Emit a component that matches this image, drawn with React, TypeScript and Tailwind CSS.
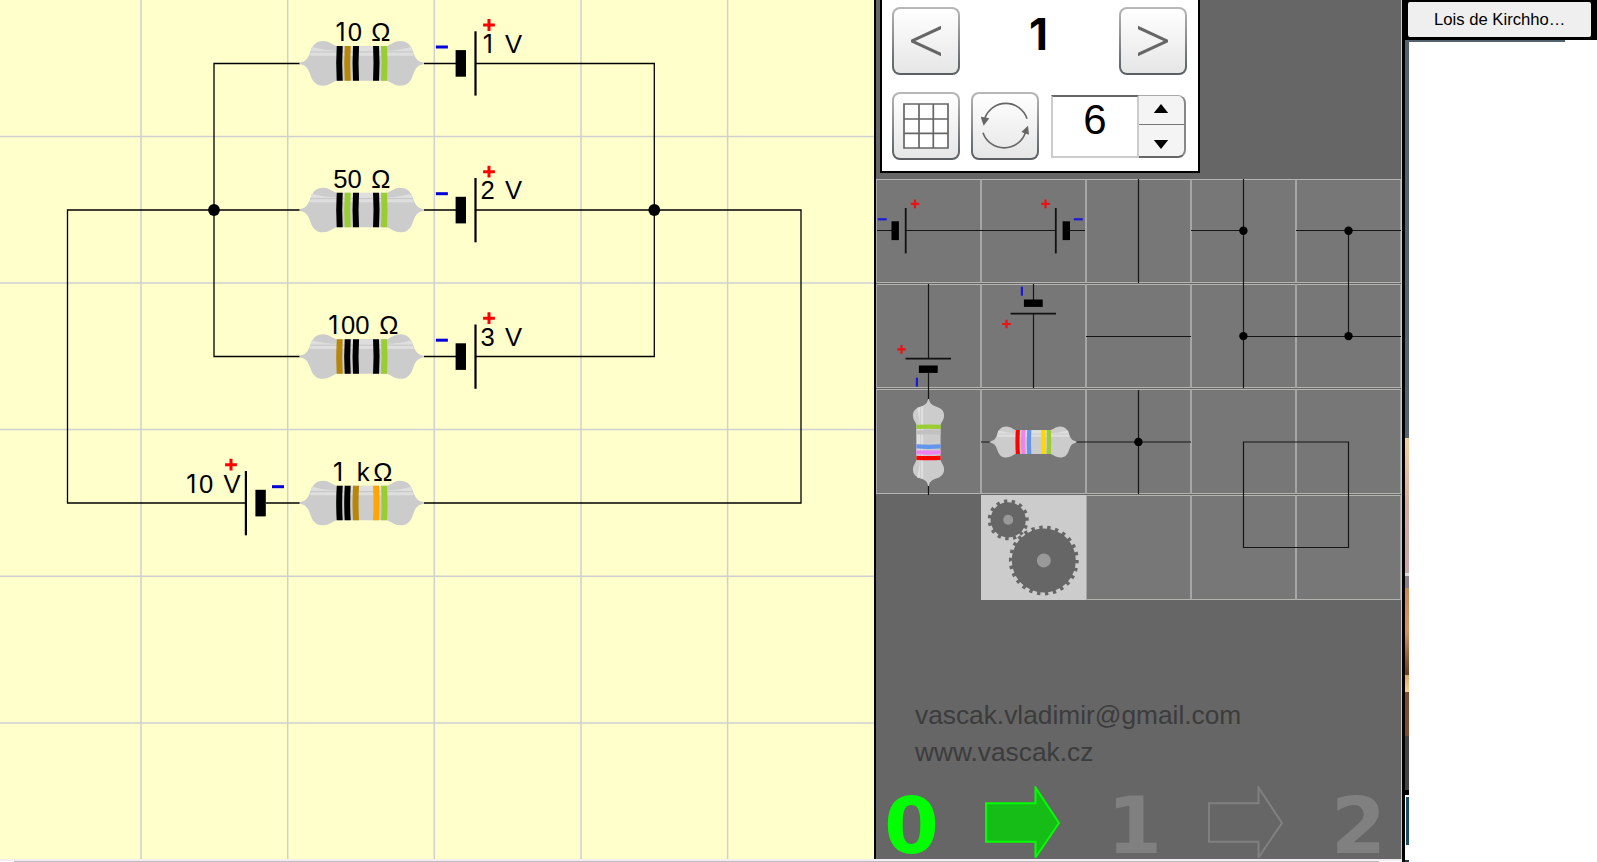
import type { ReactNode } from "react";

const LABEL_FONT = "fill-black font-['Liberation_Sans',Arial,sans-serif] text-[25.6px]";

const BLACK = "#000000";
const BROWN = "#b8860b";
const GREEN = "#9acd32";
const ORANGE = "#ffa500";

const BAND_X = [-66, -42, -17, 43, 67];

function Resistor({ x, y, bands, scale = 1 / 3, rotate = 0 }: { x: number; y: number; bands: string[]; scale?: number; rotate?: number }) {
  return (
    <g transform={`translate(${x} ${y}) rotate(${rotate}) scale(${scale})`}>
      <path
        fill="#cccccc"
        d="M-187 -2C-170 -5 -163 -10 -155 -32C-148 -54 -138 -67 -115 -67C-98 -67 -90 -57 -76 -52H76C90 -57 98 -67 115 -67C138 -67 148 -54 155 -32C163 -10 170 -5 187 -2V2C170 5 163 10 155 32C148 54 138 67 115 67C98 67 90 57 76 52H-76C-90 57 -98 67 -115 67C-138 67 -148 54 -155 32C-163 10 -170 5 -187 2Z"
      />
      <path fill="#dedede" d="M-150 -49C-120 -42 -98 -38 -76 -38V-51H76V-38C98 -38 120 -42 150 -49L156 -23H-156Z" />
      <path stroke="#c4c4c4" strokeWidth="3" d="M-154 -34H154" />
      {BAND_X.map((bx, i) => {
        const bend = i < 3 ? 1 : -1;
        return (
          <path
            key={bx}
            fill={bands[i]}
            d={`M${bx - 9} -52H${bx + 9}Q${bx + 9 - 3 * bend} 0 ${bx + 9} 52H${bx - 9}Q${bx - 9 - 3 * bend} 0 ${bx - 9} -52Z`}
          />
        );
      })}
    </g>
  );
}

function Battery({ x, y, flip = false }: { x: number; y: number; flip?: boolean }) {
  return (
    <g transform={`translate(${x} ${y}) scale(${flip ? -1 : 1} 1)`}>
      <rect x="-19.8" y="-13.2" width="10.4" height="26.6" />
      <rect x="-1" y="-32" width="2.2" height="64.3" />
      <path stroke="#ff0000" strokeWidth="3" d="M7.7 -38.3H19.5M13.6 -44.2V-32.4" transform={flip ? "translate(1.4 0)" : undefined} />
      <path stroke="#0000dd" strokeWidth="3" d="M-39.5 -16.3H-27.5" transform={flip ? "translate(1.5 0)" : undefined} />
    </g>
  );
}

function SmallBattery({ x, y, rotate = 0, flip = false }: { x: number; y: number; rotate?: number; flip?: boolean }) {
  return (
    <g transform={`translate(${x} ${y}) rotate(${rotate}) scale(${flip ? -1 : 1} 1)`}>
      <rect x="-14.2" y="-9.4" width="7.4" height="18.8" />
      <path stroke="#111111" strokeWidth="1.8" d="M0 -22.7V22.7" />
      <path stroke="#ee1111" strokeWidth="2.2" d={flip ? "M6 -26.8H14.6M10.3 -31.1V-22.5" : "M5 -26.8H13.6M9.3 -31.1V-22.5"} />
      <path stroke="#1a1ad6" strokeWidth="2.2" d={flip ? "M-27 -11.4H-18" : "M-28 -11.4H-19"} />
    </g>
  );
}

const ROWS = [
  { y: 63.3, bands: [BLACK, BROWN, BLACK, BLACK, GREEN] },
  { y: 210, bands: [BLACK, GREEN, BLACK, BLACK, GREEN] },
  { y: 356.5, bands: [BROWN, BLACK, BLACK, BLACK, GREEN] },
];

function One({ x }: { x: number }) {
  return <tspan x={x} className="font-[Inter,sans-serif] text-[25px]">1</tspan>;
}

function Circuit() {
  return (
    <svg className="block h-[859px] w-[874px] shrink-0 bg-[#ffffcc]" viewBox="0 0 874 859">
      <path
        stroke="#d0d0d0"
        strokeWidth="1.5"
        d="M141 0V859M287.7 0V859M434.3 0V859M581 0V859M727.6 0V859M0 136.5H874M0 283H874M0 429.6H874M0 576.3H874M0 723H874"
      />
      <path
        fill="none"
        stroke="#000000"
        strokeWidth="1.3"
        d="M300 63.5H214V356.5H300M300 210H67.5V503H246M424 63.5H456M424 210H456M424 356.5H456M476 63.5H654.3V356.5H476M476 210H801V503H424M266 503H300"
      />
      <circle cx="214" cy="210" r="5.9" />
      <circle cx="654.3" cy="210" r="5.9" />
      {ROWS.map((row) => (
        <g key={row.y}>
          <Resistor x={361.7} y={row.y} bands={row.bands} />
          <Battery x={475.4} y={row.y} />
        </g>
      ))}
      <Resistor x={361.7} y={503} bands={[BLACK, BLACK, BROWN, ORANGE, GREEN]} />
      <Battery x={246} y={503} flip />
      <g className={LABEL_FONT}>
        <text y="41"><One x={335.5} /><tspan x="347.8">0</tspan> <tspan x="371.3">Ω</tspan></text>
        <text x="333.3" y="187.6">50 <tspan x="371.3">Ω</tspan></text>
        <text y="334.3"><One x={328.3} /><tspan x="341">00</tspan> <tspan x="379.3">Ω</tspan></text>
        <text y="481"><One x={333} /> <tspan x="356.8">k</tspan><tspan x="373.3">Ω</tspan></text>
        <text y="52.7"><One x={482.7} /> <tspan x="505">V</tspan></text>
        <text x="480.4" y="199.3">2 <tspan x="505">V</tspan></text>
        <text x="480.4" y="346">3 <tspan x="505">V</tspan></text>
        <text y="492.7"><One x={186.3} /><tspan x="199">0</tspan> <tspan x="223.6">V</tspan></text>
      </g>
    </svg>
  );
}

function PushButton({ label, children }: { label: string; children: ReactNode }) {
  return (
    <button aria-label={label} className="h-[68px] w-[68px] rounded-lg bg-linear-to-b from-[#b8b8b8] to-[#5a5e62] p-[2px]">
      <span className="flex h-full w-full items-center justify-center rounded-md bg-linear-to-b from-white to-[#e6e6e6]">{children}</span>
    </button>
  );
}

function Controls() {
  return (
    <div className="ml-1 flex h-[173px] w-[320px] shrink-0 flex-col gap-[17px] border-x-2 border-b-2 border-black bg-white pt-[7px] pr-[11px] pl-[10px]">
      <div className="flex items-start justify-between">
        <PushButton label="Previous">
          <svg viewBox="0 0 96 96" className="h-8 w-8" fill="#666666">
            <path d="M93 2V13L16 48L93 83V94L3 52V44Z" />
          </svg>
        </PushButton>
        <span className="mt-[1px] mr-[2px] w-[40px] text-center font-[Inter,sans-serif] text-[44px] leading-[52px] font-bold text-black">1</span>
        <PushButton label="Next">
          <svg viewBox="0 0 96 96" className="h-8 w-8" fill="#666666">
            <path d="M3 2V13L80 48L3 83V94L93 52V44Z" />
          </svg>
        </PushButton>
      </div>
      <div className="flex items-start">
        <PushButton label="Grid">
          <svg viewBox="0 0 46 46" className="h-[46px] w-[46px]" fill="white" stroke="#666666" strokeWidth="1.7">
            <path d="M1 1H45V45H1ZM16 1V45M30.3 1V45M1 16H45M1 30.3H45" />
          </svg>
        </PushButton>
        <span className="w-[11px]" />
        <PushButton label="Reset">
          <svg viewBox="0 0 144 144" className="h-[48px] w-[48px]" fill="none" stroke="#666666" strokeWidth="5">
            <path d="M138 50A67 67 0 0 0 11 50M6 92A67 67 0 0 0 133 92" />
            <path fill="#666666" stroke="none" d="M-1 44L25 49L8 71ZM144 98L121 90L141 71Z" />
          </svg>
        </PushButton>
        <span className="w-[12px]" />
        <div className="mt-[3px] flex h-[63px]">
          <div className="w-[88px] border-2 border-t-[#666666] border-r-[#cccccc] border-b-[#cccccc] border-l-[#cccccc] bg-white pt-[2px] text-center font-['Liberation_Sans',Arial,sans-serif] text-[42px] leading-[42px] text-black">
            6
          </div>
          <div className="flex w-[47px] flex-col overflow-hidden rounded-r-lg border-t border-r-2 border-b-2 border-t-[#aaaaaa] border-r-[#888888] border-b-[#666666] bg-[#f4f4f4]">
            <div className="flex h-[29px] items-center justify-center border-b border-[#777777]">
              <svg viewBox="0 0 16 10" className="mt-[-4px] mr-[1px] h-[9px] w-4"><path d="M8 0L16 10H0Z" /></svg>
            </div>
            <div className="flex grow items-center justify-center">
              <svg viewBox="0 0 16 10" className="mt-[8px] mr-[1px] h-[9px] w-4"><path d="M8 10L16 0H0Z" /></svg>
            </div>
          </div>
        </div>
      </div>
    </div>
  );
}

function Gear({ x, y, r, teeth, phase, hole }: { x: number; y: number; r: number; teeth: number; phase: number; hole: number }) {
  return (
    <g transform={`translate(${x} ${y}) rotate(${phase})`}>
      <circle r={r - 2.9} fill="#666666" />
      <circle r={r - 1.9} fill="none" stroke="#666666" strokeWidth="3.8" pathLength={teeth * 2} strokeDasharray="0.85 1.15" />
      <circle r={hole} fill="#999999" />
    </g>
  );
}

const CELLS = Array.from({ length: 20 }, (_, i) => i);

function Palette() {
  return (
    <div className="relative mt-[6px] h-[420px] w-[525px] shrink-0">
      <div className="grid grid-cols-5 grid-rows-[104px_104px_105px_105px] gap-y-px">
        {CELLS.map((i) => (
          <div
            key={i}
            className={
              i === 15
                ? ""
                : i === 16
                  ? "bg-[#cccccc]"
                  : "border border-x-[#a6a6a6] border-y-[#b4b4b0] bg-[#777777]"
            }
          />
        ))}
      </div>
      <svg className="absolute top-0 left-0 h-[420px] w-[525px]" viewBox="876 179 525 420">
        <path
          fill="none"
          stroke="#161616"
          strokeWidth="1.2"
          d="M877 230.5H892M906 230.5H1056M1070 230.5H1085M1138.5 179V283M1243.5 179V388M1191 230.5H1243M1296 230.5H1401M1348.5 230V336M1243 336.5H1401M1086 336.5H1191M928.5 284V358M928.5 373V400M1033.5 284V300M1033.5 314V388M928.5 485V495M981 442H991M1076 442H1191M1138.5 390V494M1243.5 442H1348.5V547.5H1243.5Z"
        />
        <circle cx="1243.4" cy="230.8" r="4.2" />
        <circle cx="1348.5" cy="230.8" r="4.2" />
        <circle cx="1243.4" cy="336.1" r="4.2" />
        <circle cx="1348.5" cy="336.1" r="4.2" />
        <circle cx="1138.4" cy="442" r="4.2" />
        <SmallBattery x={905.7} y={230.7} />
        <SmallBattery x={1055.8} y={230.7} flip />
        <SmallBattery x={928.3} y={358.7} rotate={-90} />
        <SmallBattery x={1033.3} y={313.7} rotate={-90} flip />
        <Resistor x={928.5} y={442.5} scale={0.2325} rotate={-90} bands={["#ff0000", "#ee82ee", "#6495ed", "#c0c0c0", GREEN]} />
        <Resistor x={1033.2} y={442} scale={0.2325} bands={["#ff0000", "#ee82ee", "#6495ed", "#ffd700", GREEN]} />
        <Gear x={1008.2} y={519.8} r={20.5} teeth={15} phase={-7} hole={5} />
        <Gear x={1043.8} y={560.5} r={34.9} teeth={26} phase={-1} hole={7} />
      </svg>
    </div>
  );
}

function Arrow({ className }: { className: string }) {
  return (
    <svg className="h-[72px] w-[76px] shrink-0" viewBox="0 0 76 72">
      <path className={className} strokeWidth="2" d="M1 17.2H50.5V1.5L74 37L50.5 71.5V55.8H1Z" />
    </svg>
  );
}

function Progress() {
  return (
    <div className="mt-[15px] flex h-[73px] shrink-0 items-start font-['DejaVu_Sans',Verdana,sans-serif] text-[79px] leading-[79px] font-bold text-[#808080]">
      <span className="ml-[8px] w-[101px] pt-[1px] text-[#00ff00]">0</span>
      <Arrow className="fill-[#17bd17] stroke-[#00ff00]" />
      <span className="ml-[46px] w-[101px] pt-[1px]">1</span>
      <Arrow className="fill-none stroke-[#808080]" />
      <span className="ml-[47px] pt-[1px]">2</span>
    </div>
  );
}

function Toolbox() {
  return (
    <div className="flex w-[528px] flex-col border-r border-l-2 border-r-[#c8c8c8] border-l-black bg-[#666666]">
      <Controls />
      <Palette />
      <div className="mt-[98px] ml-[39px] shrink-0 font-['Liberation_Sans',Arial,sans-serif] text-[26.3px] leading-[37px] text-[#3c3c3c]">
        <div>vascak.vladimir@gmail.com</div>
        <div>www.vascak.cz</div>
      </div>
      <Progress />
    </div>
  );
}

function Sidebar() {
  return (
    <div className="flex w-[195px] flex-col bg-black">
      <div className="h-[40px] pt-[2px] pl-[6px]">
        <div className="h-[35px] w-[183px] rounded-[2px] bg-[#efefef] pl-[26px] font-['Liberation_Sans',Arial,sans-serif] text-[16.67px] leading-[35px] text-black">
          Lois de Kirchho…
        </div>
      </div>
      <div className="ml-[3px] flex grow">
        <div className="flex w-1 flex-col">
          <div className="h-[398px] bg-[#55636c]" />
          <div className="h-[135px] bg-linear-to-b from-[#f5cf9c] via-[#d3aa9e] to-[#c5a5a5]" />
          <div className="h-[3px] bg-[#ddd]" />
          <div className="h-[12px] bg-[#8c7d88]" />
          <div className="h-[87px] bg-linear-to-b from-[#cf8753] via-[#d8935c] to-[#6b3b20]" />
          <div className="h-[17px] bg-linear-to-b from-[#e3a45f] to-[#f9cd90]" />
          <div className="h-[44px] bg-[#804b30]" />
          <div className="h-[54px] bg-[#444444]" />
          <div className="h-[5px] bg-black" />
          <div className="h-[2px] bg-white" />
          <div className="h-[48px] border-l border-white bg-[#1d4f60]" />
          <div className="h-[15px] bg-white" />
          <div className="h-[2px] bg-[#1d3f50]" />
        </div>
        <div className="grow bg-white">
          <div className="h-[2px] w-[156px] bg-[#55636c]" />
        </div>
      </div>
    </div>
  );
}

export default function App() {
  return (
    <div className="flex h-[862px] w-[1597px] overflow-hidden bg-white">
      <div className="flex w-[1402px] flex-col">
        <div className="flex h-[859px]">
          <Circuit />
          <Toolbox />
        </div>
        <div className="h-[2px] bg-[#f1edf1]" />
        <div className="ml-[14px] h-px w-[1365px] bg-[#bdbdbd]" />
      </div>
      <Sidebar />
    </div>
  );
}
